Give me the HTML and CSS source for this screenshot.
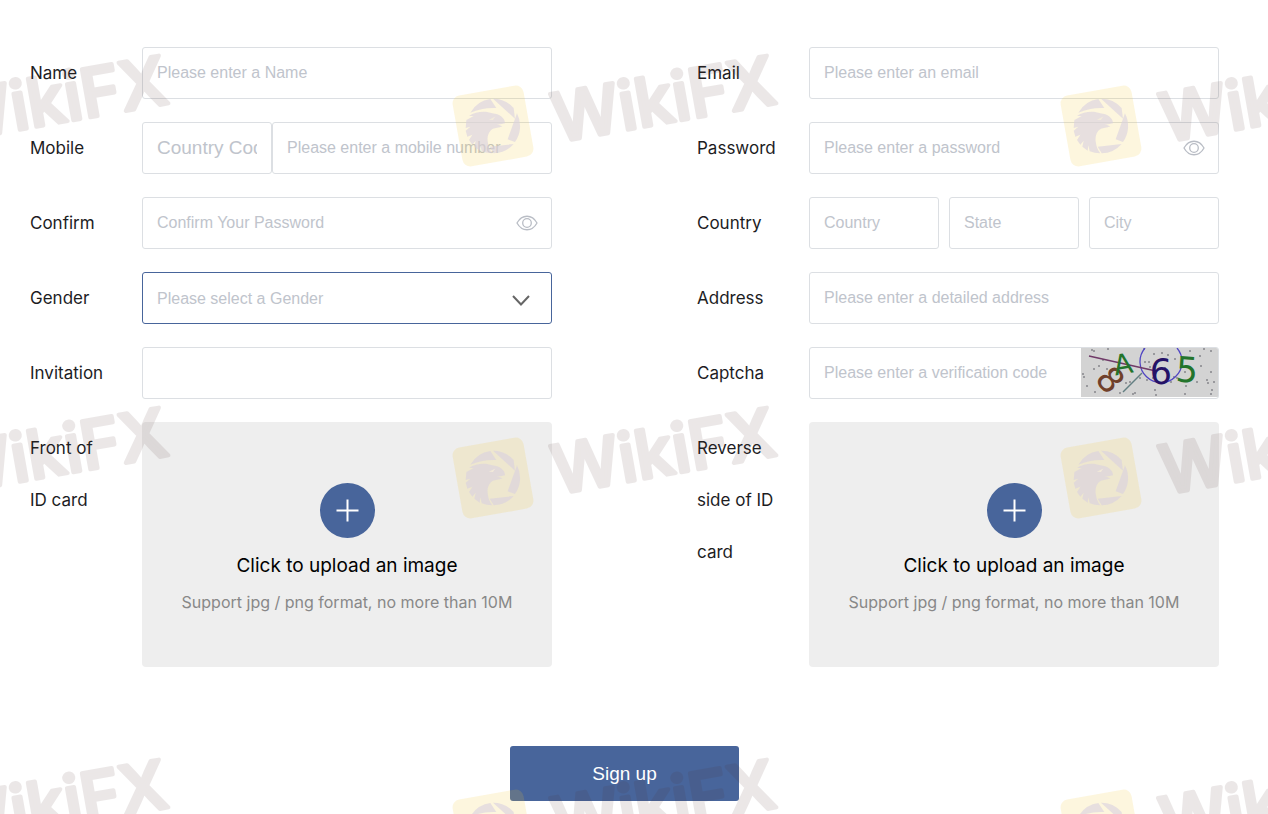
FILE: index.html
```html
<!DOCTYPE html>
<html lang="en">
<head>
<meta charset="utf-8">
<meta name="viewport" content="width=device-width, initial-scale=1">
<title>Sign up</title>
<link rel="stylesheet" href="styles.css">
</head>
<body>
<svg class="sprite" aria-hidden="true">
  <symbol id="eye" viewBox="0 0 22 16">
    <path d="M1 8C6-1 16-1 21 8C16 17 6 17 1 8Z"/><circle cx="11" cy="8" r="4.3"/>
  </symbol>
  <symbol id="eagle" viewBox="-40 -40 80 80">
    <rect class="badge" x="-36" y="-36" width="72" height="72" rx="8"/>
    <path class="bird" transform="rotate(10) scale(.333)" d="M-68-40A82 82 0 0 1-8-81L10-54Q-32-56-68-40ZM0-82A82 82 0 0 1 62-54L66-22ZM72-38A82 82 0 0 1 66 48L44 40ZM62 54A82 82 0 0 1 2 82L-10 62ZM-80-18L-58-30L-72-30C-52-44-22-46-2-38C20-36 36-24 36-8C28-6 20-4 12-5L28 1C18 6 6 6 0 8C-12 14-18 30-16 46C-14 62-10 72-2 82A82 82 0 0 1-34 76L-38 58L-40 74L-56 62L-52 44L-62 56L-72 42L-62 26L-77 32L-82 14L-68 2L-82 6Z"/>
    <path class="badge-eye" d="M-3-7L4-9L1-6Z"/>
  </symbol>
</svg>
<main class="page">
  <form class="form">
    <div class="fields">
      <div class="field">
        <label class="label" for="name">Name</label>
        <input class="input" id="name" type="text" placeholder="Please enter a Name">
      </div>
      <div class="field">
        <label class="label" for="email">Email</label>
        <input class="input" id="email" type="email" placeholder="Please enter an email">
      </div>
      <div class="field">
        <label class="label" for="mobile">Mobile</label>
        <div class="phone">
          <input class="input code" type="text" placeholder="Country Code" aria-label="Country Code">
          <input class="input" id="mobile" type="tel" placeholder="Please enter a mobile number">
        </div>
      </div>
      <div class="field">
        <label class="label" for="password">Password</label>
        <div class="control">
          <input class="input" id="password" type="password" placeholder="Please enter a password">
          <button class="reveal" type="button" aria-label="Show password"><svg class="eye"><use href="#eye"/></svg></button>
        </div>
      </div>
      <div class="field">
        <label class="label" for="confirm">Confirm</label>
        <div class="control">
          <input class="input" id="confirm" type="password" placeholder="Confirm Your Password">
          <button class="reveal" type="button" aria-label="Show password"><svg class="eye"><use href="#eye"/></svg></button>
        </div>
      </div>
      <div class="field">
        <label class="label" for="country">Country</label>
        <div class="place">
          <input class="input" id="country" type="text" placeholder="Country">
          <input class="input" type="text" placeholder="State" aria-label="State">
          <input class="input" type="text" placeholder="City" aria-label="City">
        </div>
      </div>
      <div class="field">
        <label class="label" for="gender">Gender</label>
        <div class="control">
          <select class="input select" id="gender"><option>Please select a Gender</option></select>
          <svg class="chevron" viewBox="0 0 18 11"><path d="M1 1L9 9.5L17 1"/></svg>
        </div>
      </div>
      <div class="field">
        <label class="label" for="address">Address</label>
        <input class="input" id="address" type="text" placeholder="Please enter a detailed address">
      </div>
      <div class="field">
        <label class="label" for="invitation">Invitation</label>
        <input class="input" id="invitation" type="text">
      </div>
      <div class="field">
        <label class="label" for="captcha">Captcha</label>
        <div class="captcha">
          <input class="captcha-input" id="captcha" type="text" placeholder="Please enter a verification code">
          <svg class="captcha-image" viewBox="0 0 137 49" role="img" aria-label="Captcha">
            <path class="dots" d="M11 2h0M13 3h0M27 1h0M3 29h0M2 26h0M6 38h0M18 18h0M13 21h0M26 21h0M22 12h0M45 35h0M52 46h0M54 45h0M49 34h0M59 30h0M63 1h0M68 14h0M69 19h0M73 6h0M81 5h0M87 7h0M84 20h0M66 32h0M74 42h0M75 47h0M90 34h0M93 29h0M96 30h0M105 38h0M104 24h0M109 3h0M112 26h0M119 8h0M120 18h0M130 3h0M130 24h0M126 32h0M131 42h0M130 46h0M127 35h0M116 34h0M123 1h0M133 34h0M104 46h0M72 30h0M101 17h0M64 14h0M94 11h0M39 45h0M14 44h0"/>
            <path class="ring" d="M64 0A21 21 0 1 0 96 0"/>
            <path class="scratch" d="M8 8L75 23"/><path class="scratch teal" d="M42 44L61 25"/>
            <text class="glyph brown" x="0" y="12" transform="translate(29 32) rotate(50)">8</text>
            <text class="glyph green small" x="0" y="10" transform="translate(42 16) rotate(-10)">A</text>
            <text class="glyph navy" x="80" y="36">6</text>
            <text class="glyph green" x="0" y="13" transform="translate(106 21) rotate(4)">5</text>
          </svg>
        </div>
      </div>
      <div class="field">
        <label class="label" for="front">Front of ID card</label>
        <label class="upload">
          <input class="file" id="front" type="file" accept="image/png,image/jpeg">
          <svg class="plus" viewBox="0 0 55 55"><circle cx="27.5" cy="27.5" r="27.5"/><path d="M16.5 27.5h22M27.5 16.5v22"/></svg>
          <span class="upload-title">Click to upload an image</span>
          <span class="upload-note">Support jpg / png format, no more than 10M</span>
        </label>
      </div>
      <div class="field">
        <label class="label" for="reverse">Reverse side of ID card</label>
        <label class="upload">
          <input class="file" id="reverse" type="file" accept="image/png,image/jpeg">
          <svg class="plus" viewBox="0 0 55 55"><circle cx="27.5" cy="27.5" r="27.5"/><path d="M16.5 27.5h22M27.5 16.5v22"/></svg>
          <span class="upload-title">Click to upload an image</span>
          <span class="upload-note">Support jpg / png format, no more than 10M</span>
        </label>
      </div>
    </div>
    <button class="submit" type="submit">Sign up</button>
  </form>
  <svg class="watermark" aria-hidden="true">
    <g transform="translate(-115 126) rotate(-10)"><text class="brand" x="60" y="27">WikiFX</text></g>
    <g transform="translate(493 126) rotate(-10)"><use href="#eagle" x="-40" y="-40" width="80" height="80"/><text class="brand" x="60" y="27">WikiFX</text></g>
    <g transform="translate(1101 126) rotate(-10)"><use href="#eagle" x="-40" y="-40" width="80" height="80"/><text class="brand" x="60" y="27">WikiFX</text></g>
    <g transform="translate(-115 478) rotate(-10)"><text class="brand" x="60" y="27">WikiFX</text></g>
    <g transform="translate(493 478) rotate(-10)"><use href="#eagle" x="-40" y="-40" width="80" height="80"/><text class="brand" x="60" y="27">WikiFX</text></g>
    <g transform="translate(1101 478) rotate(-10)"><use href="#eagle" x="-40" y="-40" width="80" height="80"/><text class="brand" x="60" y="27">WikiFX</text></g>
    <g transform="translate(-115 830) rotate(-10)"><text class="brand" x="60" y="27">WikiFX</text></g>
    <g transform="translate(493 830) rotate(-10)"><use href="#eagle" x="-40" y="-40" width="80" height="80"/><text class="brand" x="60" y="27">WikiFX</text></g>
    <g transform="translate(1101 830) rotate(-10)"><use href="#eagle" x="-40" y="-40" width="80" height="80"/><text class="brand" x="60" y="27">WikiFX</text></g>
  </svg>
</main>
</body>
</html>
```
FILE: styles.css
```css
* { box-sizing: border-box; }
body { margin: 0; background: #fff; color: #1d1d1f; font-family: Inter, "Liberation Sans", sans-serif; }
.sprite { position: absolute; width: 0; height: 0; }
.page { position: relative; min-height: 100vh; overflow: hidden; }
.form { padding: 47px 49px 13px 30px; display: flex; flex-direction: column; align-items: center; gap: 79px; }
.fields { width: 100%; display: grid; grid-template-columns: 1fr 1fr; column-gap: 145px; row-gap: 23px; }
.field { display: grid; grid-template-columns: 82px minmax(0, 1fr); column-gap: 30px; align-items: start; }
.label { font-size: 17px; line-height: 52px; }

.input { width: 100%; min-width: 0; height: 52px; padding: 0 14px; border: 1px solid #dcdfe3; border-radius: 3px; background: #fff; color: #333; font: 16px "Liberation Sans", Arial, sans-serif; }
.input::placeholder, .captcha-input::placeholder { color: #c0c4cc; opacity: 1; }
.phone { display: grid; grid-template-columns: 130px minmax(0, 1fr); }
.code { font-size: 19px; }
.place { display: grid; grid-template-columns: repeat(3, minmax(0, 1fr)); gap: 10px; }
.control { position: relative; }
.reveal { position: absolute; right: 13px; top: 14px; width: 24px; height: 24px; padding: 0; border: 0; background: none; display: grid; place-items: center; }
.eye { width: 22px; height: 16px; fill: none; stroke: #b9bdc5; stroke-width: 1.3; }
.select { appearance: none; border-color: #48659b; color: #c0c4cc; }
.chevron { position: absolute; right: 22px; top: 23px; width: 18px; height: 11px; fill: none; stroke: #666; stroke-width: 2; pointer-events: none; }

.captcha { height: 52px; display: flex; align-items: flex-start; border: 1px solid #dcdfe3; border-radius: 3px; overflow: hidden; }
.captcha-input { flex: 1; min-width: 0; height: 50px; padding: 0 0 0 14px; border: 0; background: none; font: 16px "Liberation Sans", Arial, sans-serif; }
.captcha-image { width: 137px; height: 49px; background: #d3d3d3; }
.dots { fill: none; stroke: #44444e; stroke-width: 1.5; stroke-linecap: round; }
.ring { fill: none; stroke: #5146c4; stroke-width: 1.3; }
.scratch { fill: none; stroke: #703a68; stroke-width: 1.4; }
.teal { stroke: #637f82; }
.glyph { font: 35px "DejaVu Sans", sans-serif; text-anchor: middle; }
.brown { fill: #70402a; }
.green { fill: #23742b; }
.navy { fill: #251267; }
.small { font-size: 28px; }

.upload { height: 245px; padding-top: 61px; border-radius: 4px; background: #eee; display: flex; flex-direction: column; align-items: center; }
.file { position: absolute; width: 1px; height: 1px; opacity: 0; }
.plus { width: 55px; height: 55px; fill: #48659b; }
.plus path { stroke: #fff; stroke-width: 2; }
.upload-title { margin-top: 10px; font-size: 19px; line-height: 36px; color: #000; }
.upload-note { font-size: 16px; line-height: 36px; color: #888; }
.submit { width: 229px; height: 55px; padding: 0; border: 0; border-radius: 3px; background: #48659b; color: #fff; font: 19px "Liberation Sans", Arial, sans-serif; }

.watermark { position: absolute; inset: 0; width: 100%; height: 100%; pointer-events: none; }
.badge { fill: #f5c832; opacity: .16; }
.bird { fill: #d8d0e0; opacity: .6; }
.badge-eye { fill: #f8efd8; opacity: .7; }
.brand { font: 500 67px Inter, sans-serif; fill: #50302c; stroke: #50302c; stroke-width: 4; stroke-linejoin: round; opacity: .11; }
```
